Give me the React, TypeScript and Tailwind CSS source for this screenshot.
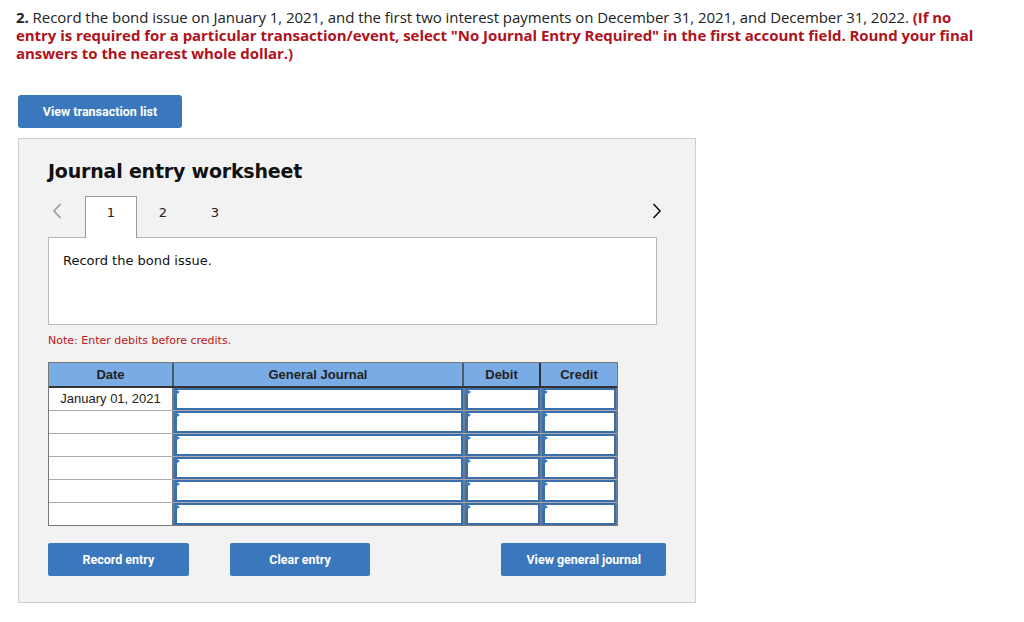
import React from 'react';

const rows = ['January 01, 2021', '', '', '', '', ''];

function Tri() {
  return <span className="absolute left-0 top-0 h-0 w-0 border-y-[4px] border-l-[6px] border-y-transparent border-l-[#3a78c0]" />;
}

function InputCell({ w }: { w: string }) {
  return (
    <div className={`relative h-[22px] ${w} border-x border-[#6d7d8f] bg-white`}>
      <div className="h-full w-full border-2 border-l-[3px] border-[#3c6eab] bg-white" />
      <Tri />
    </div>
  );
}

const verdana = "font-['Verdana','DejaVu_Sans',sans-serif]";

export default function App() {
  return (
    <div className="min-h-screen bg-white px-[16px] pt-[8px] font-['Open_Sans',sans-serif] text-[15px] leading-[18px] text-[#222]">
      <p className="w-[970px] tracking-[-0.05px]">
        <b>2.</b> Record the bond issue on January 1, 2021, and the first two interest payments on December 31, 2021, and December 31, 2022.{' '}
        <b className="text-[#b0121b]">
          (If no entry is required for a particular transaction/event, select "No Journal Entry Required" in the first account field. Round your final answers to the nearest whole dollar.)
        </b>
      </p>

      <button className="ml-[2px] mt-[33px] h-[33px] w-[164px] rounded-[3px] bg-[#3a77bc] font-['Roboto',sans-serif] text-[12.5px] font-bold text-white">
        View transaction list
      </button>

      <div className={`ml-[2px] mt-[10px] h-[465px] w-[678px] border border-[#cfcfcf] bg-[#f2f2f2] px-[29px] pt-[18px] ${verdana}`}>
        <h2 className="text-[19px] font-bold leading-[28px] tracking-[-0.2px] text-[#111]">Journal entry worksheet</h2>

        <div className="mt-[11px] flex h-[41px] items-stretch">
          <span className="flex w-[37px] items-start pl-[4px] pt-[7px]">
            <svg width="10" height="16" viewBox="0 0 10 16"><path d="M8.5 1 L2 8 L8.5 15" fill="none" stroke="#999" strokeWidth="1.6" /></svg>
          </span>
          <div className="relative z-10 -mb-px flex w-[52px] justify-center border border-b-0 border-[#9a9a9a] bg-white pt-[7px] text-[13px]">1</div>
          <div className="flex w-[52px] justify-center pt-[8px] text-[13px]">2</div>
          <div className="flex w-[52px] justify-center pt-[8px] text-[13px]">3</div>
          <span className="ml-auto flex items-start pr-[4px] pt-[7px]">
            <svg width="10" height="16" viewBox="0 0 10 16"><path d="M1.5 1 L8 8 L1.5 15" fill="none" stroke="#111" strokeWidth="1.6" /></svg>
          </span>
        </div>

        <div className="h-[88px] w-[609px] border border-[#b9b9b9] bg-white px-[14px] pt-[14px] text-[13px] text-[#111]">Record the bond issue.</div>

        <p className="mt-[7px] text-[11px] text-[#c0141c]">Note: Enter debits before credits.</p>

        <div className="mt-[12px] w-[570px] border border-[#777] font-['Liberation_Sans',sans-serif]">
          <div className="flex h-[25px] border-b-2 border-[#333] bg-[#79ace5] text-[13px] font-bold leading-[24px] text-[#222]">
            <div className="w-[125px] border-r-2 border-[#4a5a6c] text-center">Date</div>
            <div className="w-[290px] border-r-2 border-[#4a5a6c] text-center">General Journal</div>
            <div className="w-[77px] border-r-2 border-[#333] text-center">Debit</div>
            <div className="flex-1 text-center">Credit</div>
          </div>
          {rows.map((d, i) => (
            <div key={i} className={`flex ${i > 0 ? 'border-t border-[#aaa]' : ''}`}>
              <div className="h-[22px] w-[124px] border-r border-[#777] bg-white text-center text-[13px] leading-[22px] text-[#222]">{d}</div>
              <InputCell w="w-[291px]" />
              <InputCell w="w-[77px]" />
              <InputCell w="flex-1" />
            </div>
          ))}
        </div>

        <div className="mt-[17px] flex font-['Roboto',sans-serif] text-[12.5px] font-bold text-white">
          <button className="h-[33px] w-[141px] rounded-[2px] bg-[#3a77bc]">Record entry</button>
          <button className="ml-[41px] h-[33px] w-[141px] rounded-[2px] bg-[#3a77bc]">Clear entry</button>
          <button className="ml-[131px] h-[33px] w-[165px] rounded-[2px] bg-[#3a77bc]">View general journal</button>
        </div>
      </div>
    </div>
  );
}
